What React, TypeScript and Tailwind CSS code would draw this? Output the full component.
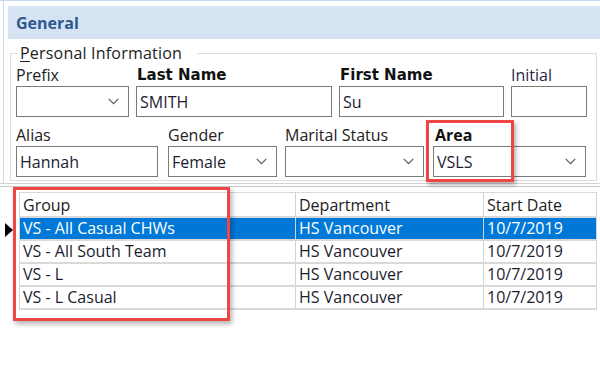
import React from 'react';

type FieldProps = {
  label: string;
  value?: string;
  width: string;
  select?: boolean;
  labelClass?: string;
  className?: string;
};

function Chevron() {
  return (
    <svg width="11" height="7" viewBox="0 0 11 7" className="shrink-0">
      <polyline points="0.7,0.8 5.5,5.6 10.3,0.8" fill="none" stroke="#5a5a5a" strokeWidth="1.2" />
    </svg>
  );
}

function Field({ label, value, width, select, labelClass, className }: FieldProps) {
  return (
    <div className={`flex flex-col ${width} ${className ?? ''}`}>
      <div className={`h-[20px] leading-[20px] whitespace-nowrap ${labelClass ?? 'text-[16px] text-[#222]'}`}>{label}</div>
      <div className="mt-[1px] h-[31px] border border-[#7a7a7a] bg-white flex items-center pl-[3px] pr-[9px] text-[16px] text-[#1c1c30]">
        <span className="flex-1 truncate">{value}</span>
        {select && <Chevron />}
      </div>
    </div>
  );
}

const rows = [
  { group: 'VS - All Casual CHWs', dept: 'HS Vancouver', start: '10/7/2019' },
  { group: 'VS - All South Team', dept: 'HS Vancouver', start: '10/7/2019' },
  { group: 'VS - L', dept: 'HS Vancouver', start: '10/7/2019' },
  { group: 'VS - L Casual', dept: 'HS Vancouver', start: '10/7/2019' },
];

const bigBold = "font-['DejaVu_Sans',sans-serif] font-bold text-[15px] text-[#111]";

export default function App() {
  return (
    <div className="relative w-[600px] h-[366px] overflow-hidden bg-white font-['Open_Sans','Noto_Sans',sans-serif] text-[#222]">
      {/* top panel */}
      <div className="h-[183px] border-t border-[#c5d7ee] overflow-hidden">
        <div className="ml-[3px] h-full border-l border-[#cddaeb] pt-[5px]">
          <div className="ml-[4px] h-[33px] bg-[#d6e3f3] flex items-center pl-[8px]">
            <span className="text-[16px] font-bold text-[#2d5a8e]">General</span>
          </div>

          <fieldset className="mt-[4px] ml-[6px] w-[587px] border border-[#dcdcdc] px-[5px] pb-[3px]">
            <legend className="ml-[2px] pl-[2px] pr-[15px] text-[16px] leading-[20px] tracking-[0.2px] text-[#222]">
              <span className="underline underline-offset-2">P</span>ersonal Information
            </legend>

            <div className="flex mt-[2px]">
              <Field label="Prefix" width="w-[113px]" select />
              <Field label="Last Name" value="SMITH" width="w-[196px]" className="ml-[7px]" labelClass={`${bigBold} pl-[1px]`} />
              <Field label="First Name" value="Su" width="w-[165px]" className="ml-[7px]" labelClass={`${bigBold} pl-[1px]`} />
              <Field label="Initial" width="w-[76px]" className="ml-[7px]" labelClass="text-[16px] text-[#2a1f4a]" />
            </div>

            <div className="flex mt-[8px]">
              <Field label="Alias" value="Hannah" width="w-[142px]" />
              <Field label="Gender" value="Female" width="w-[109px]" className="ml-[10px]" select />
              <Field label="Marital Status" width="w-[139px]" className="ml-[8px]" select />
              <Field label="Area" value="VSLS" width="w-[153px]" className="ml-[9px]" select labelClass="text-[16px] font-bold text-[#111] pl-[2px]" />
            </div>
          </fieldset>
        </div>
      </div>

      {/* splitter */}
      <div className="h-[4px] border-t border-b border-t-[#d2d2d2] border-b-[#c6c6c6]" />

      {/* grid */}
      <div className="pt-[5px] text-[16px]">
        <div className="flex h-[26px]">
          <div className="w-[19px] shrink-0" />
          <div className="flex border-t border-b-2 border-[#d9d9d9]">
            <div className="w-[277px] border-l border-r border-[#d4d4d4] pl-[3px] leading-[24px] text-[#1c1c1c]">Group</div>
            <div className="w-[188px] border-r border-[#d4d4d4] pl-[3px] leading-[24px] text-[#1c1c1c]">Department</div>
            <div className="w-[113px] border-r border-[#d4d4d4] pl-[3px] leading-[24px] text-[#1c1c1c]">Start Date</div>
          </div>
        </div>

        {rows.map((r, i) => {
          const sel = i === 0;
          return (
            <div key={i} className="flex h-[23px]">
              <div className="w-[19px] shrink-0 flex items-center pl-[5px]">
                {sel && (
                  <svg width="8" height="14" viewBox="0 0 8 14">
                    <polygon points="0,0 8,7 0,14" fill="#000" />
                  </svg>
                )}
              </div>
              <div className={`flex border-b-2 border-[#d9d9d9] ${sel ? 'bg-[#0078d7] text-white' : 'text-[#1c1c30]'}`}>
                <div className="w-[277px] border-l border-r border-[#d4d4d4] pl-[3px] leading-[21px] whitespace-nowrap">{r.group}</div>
                <div className="w-[188px] border-r border-[#d4d4d4] pl-[3px] leading-[21px] whitespace-nowrap">{r.dept}</div>
                <div className="w-[113px] border-r border-[#d4d4d4] pl-[3px] leading-[21px] whitespace-nowrap">{r.start}</div>
              </div>
            </div>
          );
        })}
      </div>

      {/* annotation boxes */}
      <div className="absolute left-[426px] top-[120px] w-[88px] h-[62px] border-[3px] border-[#f04545] shadow-[2px_3px_4px_rgba(0,0,0,0.3)]" />
      <div className="absolute left-[13px] top-[187px] w-[217px] h-[134px] border-[3px] border-[#f04545] shadow-[2px_3px_5px_rgba(0,0,0,0.3)]" />
    </div>
  );
}
